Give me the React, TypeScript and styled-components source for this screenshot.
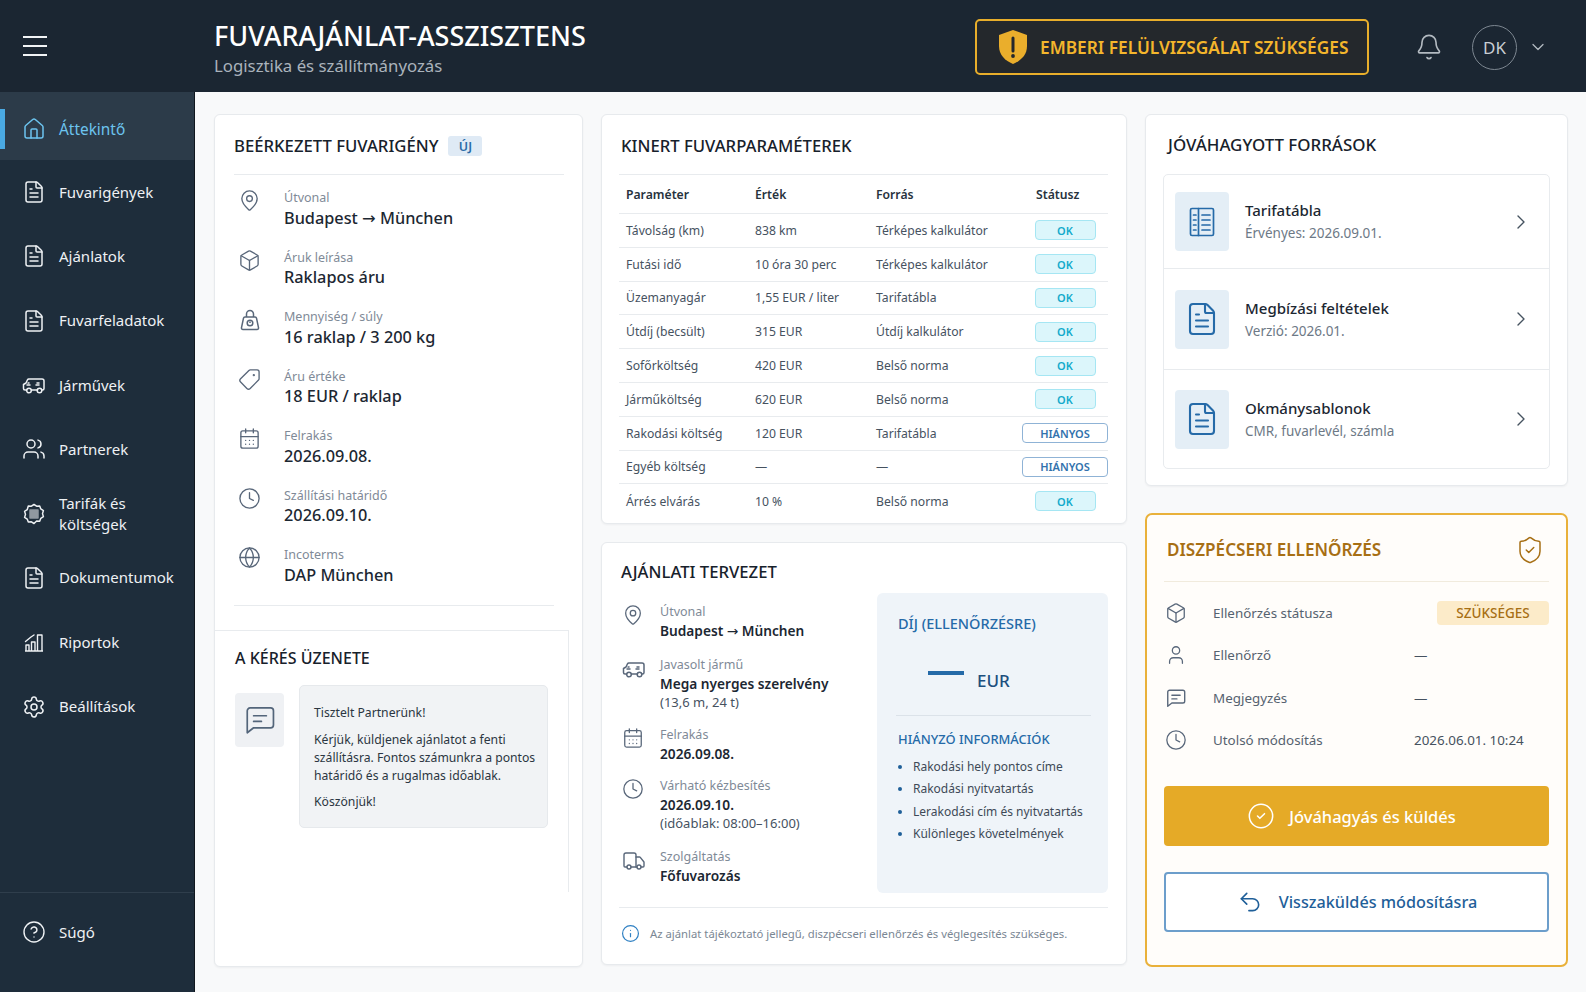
import styled, { createGlobalStyle } from "styled-components";
import {
  Bell,
  Box,
  CalendarDays,
  ChevronDown,
  ChevronRight,
  CircleCheck,
  CircleHelp,
  Clock,
  FileText,
  Globe,
  Home,
  Info,
  MapPin,
  Settings,
  ShieldCheck,
  Tag,
  Truck,
  Undo2,
  User,
  Users,
} from "lucide-react";

// ------ small drawn icons that lucide does not have ------
const VanIcon = ({ size = 24 }: { size?: number }) => (
  <svg width={size} height={size} viewBox="0 0 24 24" fill="none" stroke="currentColor" strokeWidth="1.5" strokeLinecap="round" strokeLinejoin="round">
    <path d="M4.5 17H3a1.5 1.5 0 0 1-1.5-1.500V11.500L4 10l1.500-3.200A1.500 1.500 0 0 1 7 6h13a2 2 0 0 1 2 2v7.500A1.500 1.500 0 0 1 20.500 17H20" />
    <path d="M9.500 17h6" />
    <circle cx="7" cy="17.500" r="2.300" />
    <circle cx="17.500" cy="17.500" r="2.300" />
    <path d="M5 12h3M6 10h1M14 12h3M15 10h2" />
  </svg>
);

const TariffIcon = ({ size = 24 }: { size?: number }) => (
  <svg width={size} height={size} viewBox="0 0 24 24" fill="none" stroke="currentColor" strokeWidth="1.5" strokeLinejoin="round">
    <path d="M12 2.500l2.600 1.700 3.100-.2 1.100 2.900 2.600 1.700-.9 3 .9 3-2.600 1.700-1.100 2.900-3.100-.2L12 21.500l-2.600-1.700-3.100.2-1.100-2.900-2.600-1.700.9-3-.9-3 2.600-1.700L6.300 4l3.100.2z" />
    <path d="M8 8h8v8H8z" fill="currentColor" opacity="0.55" />
  </svg>
);

const ReportIcon = ({ size = 24 }: { size?: number }) => (
  <svg width={size} height={size} viewBox="0 0 24 24" fill="none" stroke="currentColor" strokeWidth="1.400" strokeLinejoin="round">
    <path d="M3 21h18M4 21v-6h3v6M9.500 21v-9h3.500v9M15.500 21V5h4.500v16" />
    <path d="M3.500 11.500L9 7l3-2" strokeLinecap="round" />
  </svg>
);

const WeightBagIcon = ({ size = 24 }: { size?: number }) => (
  <svg width={size} height={size} viewBox="0 0 24 24" fill="none" stroke="currentColor" strokeWidth="1.500" strokeLinejoin="round">
    <path d="M7 9h10a1.500 1.500 0 0 1 1.500 1.200l2 9.500a1.500 1.500 0 0 1-1.500 1.800H5a1.500 1.500 0 0 1-1.500-1.800l2-9.500A1.500 1.500 0 0 1 7 9z" />
    <path d="M8.500 9V6a3.500 3.500 0 0 1 7 0v3" />
    <circle cx="12" cy="15" r="2.800" />
    <path d="M12 13.500v1.500" />
  </svg>
);

const TableBookIcon = ({ size = 32 }: { size?: number }) => (
  <svg width={size} height={size} viewBox="0 0 32 32" fill="none" stroke="currentColor" strokeWidth="1.700" strokeLinecap="round" strokeLinejoin="round">
    <rect x="4.500" y="2.500" width="23" height="27" rx="1.500" />
    <path d="M12.500 2.500v27M7.500 9h2.500M7.500 14h2.500M7.500 19h2.500M7.500 24h2.500M16 9h8M16 14h8M16 19h8M16 24h8" />
  </svg>
);

const ChatIcon = ({ size = 22, stroke = 1.5 }: { size?: number; stroke?: number }) => (
  <svg width={size} height={size} viewBox="0 0 24 24" fill="none" stroke="currentColor" strokeWidth={stroke} strokeLinecap="round" strokeLinejoin="round">
    <path d="M5 3.500h14.500a2 2 0 0 1 2 2v10a2 2 0 0 1-2 2H7.500L3 21V5.500a2 2 0 0 1 2-2z" />
    <path d="M7.500 9h9M7.500 13h5.500" />
  </svg>
);

const AlertShield = () => (
  <svg width="32" height="36" viewBox="0 0 32 36">
    <path d="M16 1l14 5v11c0 9-6 14.500-14 18C8 31.500 2 26 2 17V6z" fill="#eaae2c" />
    <path d="M16 9v13" stroke="#23272c" strokeWidth="3" strokeLinecap="round" />
    <circle cx="16" cy="27" r="1.900" fill="#23272c" />
  </svg>
);

const MirroredTag = styled(Tag)`
  transform: scaleX(-1);
`;

const Arrow = styled.span`
  font-family: "DejaVu Sans", sans-serif;
  font-weight: 400;
`;

const Route = () => (
  <>
    Budapest <Arrow>→</Arrow> München
  </>
);

// ------ page data ------
const navItems = [
  { label: "Áttekintő", icon: <Home size={24} strokeWidth={1.5} />, active: true },
  { label: "Fuvarigények", icon: <FileText size={24} strokeWidth={1.5} /> },
  { label: "Ajánlatok", icon: <FileText size={24} strokeWidth={1.5} /> },
  { label: "Fuvarfeladatok", icon: <FileText size={24} strokeWidth={1.5} /> },
  { label: "Járművek", icon: <VanIcon /> },
  { label: "Partnerek", icon: <Users size={24} strokeWidth={1.5} /> },
  { label: "Tarifák és költségek", icon: <TariffIcon /> },
  { label: "Dokumentumok", icon: <FileText size={24} strokeWidth={1.5} /> },
  { label: "Riportok", icon: <ReportIcon /> },
  { label: "Beállítások", icon: <Settings size={24} strokeWidth={1.5} /> },
];

const requestRows = [
  { label: "Útvonal", value: <Route />, icon: <MapPin size={23} strokeWidth={1.4} /> },
  { label: "Áruk leírása", value: "Raklapos áru", icon: <Box size={23} strokeWidth={1.4} /> },
  { label: "Mennyiség / súly", value: "16 raklap / 3 200 kg", icon: <WeightBagIcon /> },
  { label: "Áru értéke", value: "18 EUR / raklap", icon: <MirroredTag size={23} strokeWidth={1.4} /> },
  { label: "Felrakás", value: "2026.09.08.", icon: <CalendarDays size={23} strokeWidth={1.4} /> },
  { label: "Szállítási határidő", value: "2026.09.10.", icon: <Clock size={23} strokeWidth={1.4} /> },
  { label: "Incoterms", value: "DAP München", icon: <Globe size={23} strokeWidth={1.4} /> },
];

const paramRows = [
  ["Távolság (km)", "838 km", "Térképes kalkulátor", "OK"],
  ["Futási idő", "10 óra 30 perc", "Térképes kalkulátor", "OK"],
  ["Üzemanyagár", "1,55 EUR / liter", "Tarifatábla", "OK"],
  ["Útdíj (becsült)", "315 EUR", "Útdíj kalkulátor", "OK"],
  ["Sofőrköltség", "420 EUR", "Belső norma", "OK"],
  ["Járműköltség", "620 EUR", "Belső norma", "OK"],
  ["Rakodási költség", "120 EUR", "Tarifatábla", "HIÁNYOS"],
  ["Egyéb költség", "—", "—", "HIÁNYOS"],
  ["Árrés elvárás", "10 %", "Belső norma", "OK"],
];

const draftRows = [
  { label: "Útvonal", value: <Route />, icon: <MapPin size={22} strokeWidth={1.4} />, h: 53 },
  { label: "Javasolt jármű", value: "Mega nyerges szerelvény", note: "(13,6 m, 24 t)", icon: <VanIcon />, h: 70 },
  { label: "Felrakás", value: "2026.09.08.", icon: <CalendarDays size={22} strokeWidth={1.4} />, h: 51 },
  { label: "Várható kézbesítés", value: "2026.09.10.", note: "(időablak: 08:00–16:00)", icon: <Clock size={22} strokeWidth={1.4} />, h: 71 },
  { label: "Szolgáltatás", value: "Főfuvarozás", icon: <Truck size={24} strokeWidth={1.4} />, h: 50 },
];

const missingInfo = [
  "Rakodási hely pontos címe",
  "Rakodási nyitvatartás",
  "Lerakodási cím és nyitvatartás",
  "Különleges követelmények",
];

const sources = [
  { title: "Tarifatábla", sub: "Érvényes: 2026.09.01.", icon: <TableBookIcon />, h: 94 },
  { title: "Megbízási feltételek", sub: "Verzió: 2026.01.", icon: <FileText size={36} strokeWidth={1.4} />, h: 101 },
  { title: "Okmánysablonok", sub: "CMR, fuvarlevél, számla", icon: <FileText size={36} strokeWidth={1.4} />, h: 98 },
];

const reviewRows = [
  { label: "Ellenőrzés státusza", icon: <Box size={22} strokeWidth={1.4} />, pill: "SZÜKSÉGES" },
  { label: "Ellenőrző", icon: <User size={22} strokeWidth={1.4} />, value: "—" },
  { label: "Megjegyzés", icon: <ChatIcon />, value: "—" },
  { label: "Utolsó módosítás", icon: <Clock size={22} strokeWidth={1.4} />, value: "2026.06.01. 10:24" },
];

function App() {
  return (
    <>
      <GlobalStyle />
      <Page>
        <TopBar>
          <MenuButton>
            <span />
            <span />
            <span />
          </MenuButton>
          <TitleBlock>
            <AppTitle>FUVARAJÁNLAT-ASSZISZTENS</AppTitle>
            <AppSubtitle>Logisztika és szállítmányozás</AppSubtitle>
          </TitleBlock>
          <ReviewBanner>
            <AlertShield />
            EMBERI FELÜLVIZSGÁLAT SZÜKSÉGES
          </ReviewBanner>
          <BellWrap>
            <Bell size={28} strokeWidth={1.4} />
          </BellWrap>
          <Avatar>DK</Avatar>
          <AvatarCaret>
            <ChevronDown size={20} strokeWidth={1.5} />
          </AvatarCaret>
        </TopBar>

        <Body>
          <Sidebar>
            <Nav>
              {navItems.map((item) => (
                <NavItem key={item.label} $active={item.active}>
                  {item.icon}
                  <span>{item.label}</span>
                </NavItem>
              ))}
            </Nav>
            <HelpRow>
              <CircleHelp size={24} strokeWidth={1.4} />
              <span>Súgó</span>
            </HelpRow>
          </Sidebar>

          <Main>
            {/* ------ left column ------ */}
            <RequestCard>
              <RequestHead>
                <CardTitle>BEÉRKEZETT FUVARIGÉNY</CardTitle>
                <NewBadge>ÚJ</NewBadge>
              </RequestHead>
              <RequestList>
                {requestRows.map((row) => (
                  <RequestRow key={row.label}>
                    <RowIcon>{row.icon}</RowIcon>
                    <div>
                      <RowLabel>{row.label}</RowLabel>
                      <RowValue>{row.value}</RowValue>
                    </div>
                  </RequestRow>
                ))}
              </RequestList>
              <MessageSection>
                <MessageTitle>A KÉRÉS ÜZENETE</MessageTitle>
                <MessageBody>
                  <MessageIcon>
                    <ChatIcon size={34} stroke={1.2} />
                  </MessageIcon>
                  <MessageBubble>
                    <p>Tisztelt Partnerünk!</p>
                    <p>
                      Kérjük, küldjenek ajánlatot a fenti szállításra. Fontos
                      számunkra a pontos határidő és a rugalmas időablak.
                    </p>
                    <p>Köszönjük!</p>
                  </MessageBubble>
                </MessageBody>
              </MessageSection>
            </RequestCard>

            {/* ------ middle column ------ */}
            <Column>
              <ParamsCard>
                <ParamsHead>
                  <CardTitle>KINERT FUVARPARAMÉTEREK</CardTitle>
                </ParamsHead>
                <ParamHeader>
                  <span>Paraméter</span>
                  <span>Érték</span>
                  <span>Forrás</span>
                  <StatusHead>Státusz</StatusHead>
                </ParamHeader>
                {paramRows.map((row) => (
                  <ParamRow key={row[0]}>
                    <span>{row[0]}</span>
                    <span>{row[1]}</span>
                    <span>{row[2]}</span>
                    <StatusPill $missing={row[3] !== "OK"}>{row[3]}</StatusPill>
                  </ParamRow>
                ))}
              </ParamsCard>

              <DraftCard>
                <DraftTitle>AJÁNLATI TERVEZET</DraftTitle>
                <DraftBody>
                  <div>
                    {draftRows.map((row) => (
                      <DraftRow key={row.label} $height={row.h}>
                        <DraftIcon>{row.icon}</DraftIcon>
                        <div>
                          <DraftLabel>{row.label}</DraftLabel>
                          <DraftValue>{row.value}</DraftValue>
                          {row.note ? <DraftNote>{row.note}</DraftNote> : null}
                        </div>
                      </DraftRow>
                    ))}
                  </div>
                  <FeePanel>
                    <PanelHeading $size={14.5}>DÍJ (ELLENŐRZÉSRE)</PanelHeading>
                    <FeeAmount>
                      <FeeDash />
                      <span>EUR</span>
                    </FeeAmount>
                    <PanelDivider />
                    <PanelHeading $size={12.9}>HIÁNYZÓ INFORMÁCIÓK</PanelHeading>
                    <MissingList>
                      {missingInfo.map((text) => (
                        <li key={text}>{text}</li>
                      ))}
                    </MissingList>
                  </FeePanel>
                </DraftBody>
                <DraftFooter>
                  <Info size={19} strokeWidth={1.5} />
                  <span>
                    Az ajánlat tájékoztató jellegű, diszpécseri ellenőrzés és
                    véglegesítés szükséges.
                  </span>
                </DraftFooter>
              </DraftCard>
            </Column>

            {/* ------ right column ------ */}
            <RightColumn>
              <SourcesCard>
                <SourcesHead>
                  <SourcesTitle>JÓVÁHAGYOTT FORRÁSOK</SourcesTitle>
                </SourcesHead>
                <SourceList>
                  {sources.map((source) => (
                    <SourceRow key={source.title} $height={source.h}>
                      <SourceIcon>{source.icon}</SourceIcon>
                      <SourceText>
                        <strong>{source.title}</strong>
                        <span>{source.sub}</span>
                      </SourceText>
                      <ChevronRight size={24} strokeWidth={1.4} />
                    </SourceRow>
                  ))}
                </SourceList>
              </SourcesCard>

              <ReviewCard>
                <ReviewHead>
                  <ReviewTitle>DISZPÉCSERI ELLENŐRZÉS</ReviewTitle>
                  <ShieldCheck size={30} strokeWidth={1.2} />
                </ReviewHead>
                <ReviewList>
                  {reviewRows.map((row) => (
                    <ReviewRow key={row.label}>
                      <ReviewIcon>{row.icon}</ReviewIcon>
                      <span>{row.label}</span>
                      {row.pill ? <NeedPill>{row.pill}</NeedPill> : <ReviewValue>{row.value}</ReviewValue>}
                    </ReviewRow>
                  ))}
                </ReviewList>
                <ApproveButton>
                  <CircleCheck size={28} strokeWidth={1.3} />
                  Jóváhagyás és küldés
                </ApproveButton>
                <ReturnButton>
                  <Undo2 size={26} strokeWidth={1.5} />
                  Visszaküldés módosításra
                </ReturnButton>
              </ReviewCard>
            </RightColumn>
          </Main>
        </Body>
      </Page>
    </>
  );
}

export default App;

// ------ component styles -------
const GlobalStyle = createGlobalStyle`
  html, body {
    margin: 0;
    padding: 0;
    background: #f8f9fa;
  }
  * {
    box-sizing: border-box;
  }
  body {
    font-family: "Noto Sans", "Open Sans", "Liberation Sans", sans-serif;
    color: #1c2732;
  }
`;

const Page = styled.div`
  width: 1586px;
  height: 992px;
  overflow: hidden;
  display: flex;
  flex-direction: column;
`;

const TopBar = styled.header`
  height: 92px;
  flex: none;
  padding-top: 2px;
  display: flex;
  align-items: center;
  background: #1b2632;
  color: #fff;
`;

const MenuButton = styled.div`
  width: 214px;
  margin-top: -2px;
  padding-left: 23px;
  display: flex;
  flex-direction: column;
  gap: 7px;

  & > span {
    display: block;
    width: 24px;
    height: 2px;
    background: #f1f3f5;
  }
`;

const TitleBlock = styled.div`
  width: 761px;
`;

const AppTitle = styled.div`
  font-size: 27px;
  font-weight: 500;
  line-height: 32px;
  margin-top: 3px;
`;

const AppSubtitle = styled.div`
  font-size: 16.8px;
  line-height: 24px;
  margin-top: 2px;
  color: #aab3bc;
`;

const ReviewBanner = styled.div`
  width: 394px;
  height: 56px;
  display: flex;
  align-items: center;
  gap: 11px;
  padding-left: 20px;
  border: 2px solid #e8ae2b;
  border-radius: 5px;
  background: #24282c;
  color: #f4b62c;
  font-size: 17.3px;
  font-weight: 600;
`;

const BellWrap = styled.div`
  margin-left: 46px;
  display: flex;
  color: #b3bac1;
`;

const Avatar = styled.div`
  width: 45px;
  height: 45px;
  margin-left: 29px;
  border: 1.5px solid #7d8791;
  border-radius: 50%;
  display: flex;
  align-items: center;
  justify-content: center;
  font-size: 17px;
  color: #c9ced3;
`;

const AvatarCaret = styled.div`
  margin-left: 11px;
  display: flex;
  color: #b3bac1;
`;

const Body = styled.div`
  flex: 1;
  display: flex;
  min-height: 0;
`;

const Sidebar = styled.aside`
  width: 195px;
  flex: none;
  display: flex;
  flex-direction: column;
  justify-content: space-between;
  background: #1e2d3b;
  border-right: 1px solid #10171e;
`;

const Nav = styled.nav`
  display: flex;
  flex-direction: column;
`;

const NavItem = styled.div<{ $active?: boolean }>`
  position: relative;
  display: flex;
  align-items: center;
  gap: 13px;
  height: 64.3px;
  padding: 0 8px 0 22px;
  font-size: 15px;
  line-height: 21px;
  color: ${(p) => (p.$active ? "#6cc4ef" : "#eef1f4")};
  background: ${(p) => (p.$active ? "#2c3b49" : "transparent")};

  & > svg {
    flex: none;
  }

  &:first-child {
    height: 68px;
    padding-top: 6px;
    font-size: 15.4px;
  }

  &::before {
    content: "";
    display: ${(p) => (p.$active ? "block" : "none")};
    position: absolute;
    left: 0;
    top: 17px;
    width: 5px;
    height: 40px;
    background: #4aa9e2;
  }
`;

const HelpRow = styled.div`
  height: 100px;
  padding: 0 0 22px 22px;
  display: flex;
  align-items: center;
  gap: 13px;
  font-size: 15px;
  color: #eef1f4;
  border-top: 1px solid #2f3e4c;
`;

const Main = styled.main`
  flex: 1;
  min-width: 0;
  display: grid;
  grid-template-columns: 369px 526px 423px;
  gap: 18px;
  padding: 22px 0 25px 19px;
  background: #f8f9fa;
`;

const Column = styled.div`
  display: flex;
  flex-direction: column;
  gap: 18px;
`;

const RightColumn = styled(Column)`
  gap: 27px;
`;

const Card = styled.section`
  background: #fff;
  border: 1px solid #e7eaed;
  border-radius: 6px;
  box-shadow: 0 1px 2px rgba(30, 45, 59, 0.05);
`;

const CardTitle = styled.h2`
  margin: 0;
  font-size: 16.7px;
  font-weight: 500;
  line-height: 24px;
  color: #17212b;
`;

const RequestCard = styled(Card)`
  display: flex;
  flex-direction: column;
`;

const RequestHead = styled.div`
  height: 60px;
  margin: 0 18px 0 19px;
  display: flex;
  align-items: center;
  gap: 10px;
  padding-top: 3px;
  border-bottom: 1px solid #e8ebee;
`;

const NewBadge = styled.span`
  width: 34px;
  height: 20px;
  display: flex;
  align-items: center;
  justify-content: center;
  border-radius: 3px;
  background: #dfeaf5;
  color: #2a6ca8;
  font-size: 12.5px;
  font-weight: 600;
`;

const RequestList = styled.div`
  height: 431px;
  margin: 0 28px 0 19px;
  padding-top: 13px;
  border-bottom: 1px solid #e8ebee;
`;

const RequestRow = styled.div`
  height: 59.5px;
  display: flex;
`;

const RowIcon = styled.div`
  width: 50px;
  flex: none;
  padding: 1px 0 0 4px;
  color: #59677a;
`;

const RowLabel = styled.div`
  font-size: 12.5px;
  line-height: 19.5px;
  color: #7f8a97;
`;

const RowValue = styled.div`
  font-size: 16.3px;
  font-weight: 500;
  line-height: 21px;
  color: #1c2732;
`;

const MessageSection = styled.div`
  width: 354px;
  height: 262px;
  margin-top: 24px;
  padding: 15px 0 0 20px;
  border-top: 1px solid #e8ebee;
  border-right: 1px solid #e8ebee;
`;

const MessageTitle = styled(CardTitle)`
  font-size: 16px;
`;

const MessageBody = styled.div`
  margin-top: 15px;
  display: flex;
  align-items: flex-start;
  gap: 15px;
`;

const MessageIcon = styled.div`
  width: 49px;
  height: 54px;
  flex: none;
  margin-top: 8px;
  display: flex;
  align-items: center;
  justify-content: center;
  border-radius: 4px;
  background: #eff1f4;
  color: #53657a;
`;

const MessageBubble = styled.div`
  width: 249px;
  height: 143px;
  padding: 18px 10px 0 14px;
  border: 1px solid #e6e9ec;
  border-radius: 5px;
  background: #f1f3f5;
  font-size: 12.2px;
  line-height: 18px;
  color: #2b3641;

  & > p {
    margin: 0 0 8.500px;
  }
`;

const ParamsCard = styled(Card)`
  height: 410px;
  padding: 0 18px 0 17px;
`;

const ParamsHead = styled.div`
  height: 60px;
  padding: 3px 0 0 2px;
  display: flex;
  align-items: center;
  border-bottom: 1px solid #e8ebee;
`;

const ParamGrid = styled.div`
  display: grid;
  grid-template-columns: 129px 121px 146px 86px;
  align-items: center;
  padding-left: 7px;
  border-bottom: 1px solid #e8ebee;
  font-size: 12.2px;
`;

const ParamHeader = styled(ParamGrid)`
  height: 39px;
  font-weight: 600;
  color: #27323d;
`;

const StatusHead = styled.span`
  padding-left: 14px;
`;

const ParamRow = styled(ParamGrid)`
  height: 33.8px;
  color: #46525f;

  &:last-child {
    border-bottom: none;
  }
`;

const StatusPill = styled.span<{ $missing: boolean }>`
  justify-self: center;
  height: 20px;
  width: ${(p) => (p.$missing ? "86px" : "61px")};
  display: flex;
  align-items: center;
  justify-content: center;
  border-radius: 4px;
  font-size: 11px;
  font-weight: 600;
  border: 1px solid ${(p) => (p.$missing ? "#8fb3d6" : "#a5e6f3")};
  background: ${(p) => (p.$missing ? "#fff" : "#dcf6fb")};
  color: ${(p) => (p.$missing ? "#3272ad" : "#13aacb")};
`;

const DraftCard = styled(Card)`
  height: 423px;
  padding: 0 18px 0 17px;
`;

const DraftTitle = styled(CardTitle)`
  padding: 17px 0 0 2px;
`;

const DraftBody = styled.div`
  margin-top: 9px;
  display: flex;
  justify-content: space-between;
  height: 300px;
`;

const DraftRow = styled.div<{ $height: number }>`
  height: ${(p) => p.$height}px;
  display: flex;
  padding-top: 9px;
`;

const DraftIcon = styled.div`
  width: 41px;
  flex: none;
  padding-left: 3px;
  padding-top: 2px;
  color: #59677a;
`;

const DraftLabel = styled.div`
  font-size: 12.5px;
  line-height: 19px;
  color: #7f8a97;
`;

const DraftValue = styled.div`
  font-size: 13.7px;
  font-weight: 600;
  line-height: 19px;
  color: #1c2732;
`;

const DraftNote = styled.div`
  font-size: 13px;
  line-height: 18px;
  color: #46525f;
`;

const FeePanel = styled.div`
  width: 231px;
  padding: 20px 17px 0 21px;
  border-radius: 6px;
  background: #eff4f9;
`;

const PanelHeading = styled.div<{ $size: number }>`
  font-size: ${(p) => p.$size}px;
  font-weight: 500;
  line-height: 20px;
  color: #256aa8;
`;

const FeeAmount = styled.div`
  height: 82px;
  padding: 32px 0 0 30px;
  display: flex;
  align-items: flex-start;
  gap: 13px;
  font-size: 17px;
  font-weight: 500;
  line-height: 32px;
  color: #1d4f7e;
`;

const FeeDash = styled.span`
  width: 36px;
  height: 4px;
  margin-top: 6px;
  background: #256aa8;
`;

const PanelDivider = styled.div`
  height: 1px;
  margin: 0 0 13px -2px;
  background: #dbe2e9;
`;

const MissingList = styled.ul`
  margin: 7px 0 0;
  padding: 0 0 0 15px;
  font-size: 12px;
  line-height: 22.3px;
  color: #3e4a57;

  & > li::marker {
    color: #1f5f99;
  }
`;

const DraftFooter = styled.div`
  height: 51px;
  margin-top: 14px;
  padding-left: 2px;
  display: flex;
  align-items: center;
  gap: 10px;
  border-top: 1px solid #e8ebee;
  font-size: 11.3px;
  color: #7b8794;

  & > svg {
    color: #2f80c3;
    flex: none;
  }
`;

const SourcesCard = styled(Card)`
  height: 372px;
  padding: 0 17px;
`;

const SourcesHead = styled.div`
  height: 59px;
  padding: 1px 0 0 5px;
  display: flex;
  align-items: center;
`;

const SourcesTitle = styled(CardTitle)`
  font-size: 16.9px;
`;

const SourceList = styled.div`
  border: 1px solid #e8ebee;
  border-radius: 5px;
`;

const SourceRow = styled.div<{ $height: number }>`
  height: ${(p) => p.$height}px;
  padding: 0 16px 0 11px;
  display: flex;
  align-items: center;
  gap: 16px;
  border-bottom: 1px solid #e8ebee;
  color: #45525f;

  &:last-child {
    border-bottom: none;
  }
`;

const SourceIcon = styled.div`
  width: 54px;
  height: 59px;
  flex: none;
  display: flex;
  align-items: center;
  justify-content: center;
  border-radius: 4px;
  background: #e4eef6;
  color: #256aa8;
`;

const SourceText = styled.div`
  flex: 1;
  display: flex;
  flex-direction: column;

  & > strong {
    font-size: 15px;
    font-weight: 500;
    line-height: 23px;
    color: #1c2732;
  }
  & > span {
    font-size: 13.5px;
    line-height: 22px;
    color: #6d7986;
  }
`;

const ReviewCard = styled.section`
  height: 454px;
  padding: 0 17px;
  background: #fffdfa;
  border: 2px solid #e9b13a;
  border-radius: 7px;
`;

const ReviewHead = styled.div`
  height: 67px;
  padding: 3px 4px 0 0;
  display: flex;
  align-items: center;
  justify-content: space-between;
  border-bottom: 1px solid #f1ebdd;
  color: #a76f14;
`;

const ReviewTitle = styled.div`
  padding-left: 3px;
  font-size: 17.1px;
  font-weight: 600;
  color: #a76f14;
`;

const ReviewList = styled.div`
  padding-top: 10px;
`;

const ReviewRow = styled.div`
  height: 42.3px;
  display: grid;
  grid-template-columns: 49px 201px 1fr;
  align-items: center;
  font-size: 13.4px;
  color: #56626f;
`;

const ReviewIcon = styled.div`
  display: flex;
  padding-left: 1px;
  color: #59677a;
`;

const ReviewValue = styled.span`
  color: #46525f;
`;

const NeedPill = styled.span`
  justify-self: end;
  width: 112px;
  height: 24px;
  display: flex;
  align-items: center;
  justify-content: center;
  border-radius: 4px;
  background: #fcebc9;
  color: #a76f14;
  font-size: 13.5px;
  font-weight: 500;
`;

const ActionButton = styled.button`
  width: 100%;
  height: 60px;
  display: flex;
  align-items: center;
  justify-content: center;
  font-family: inherit;
  font-weight: 500;
`;

const ApproveButton = styled(ActionButton)`
  margin-top: 25px;
  padding-right: 16px;
  gap: 14px;
  border: none;
  border-radius: 4px;
  background: #e5aa27;
  color: #fff;
  font-size: 16.5px;
`;

const ReturnButton = styled(ActionButton)`
  margin-top: 26px;
  padding-right: 5px;
  gap: 16px;
  border: 2px solid #6c9ecb;
  border-radius: 4px;
  background: #fff;
  color: #1f5f99;
  font-size: 16.2px;
`;
